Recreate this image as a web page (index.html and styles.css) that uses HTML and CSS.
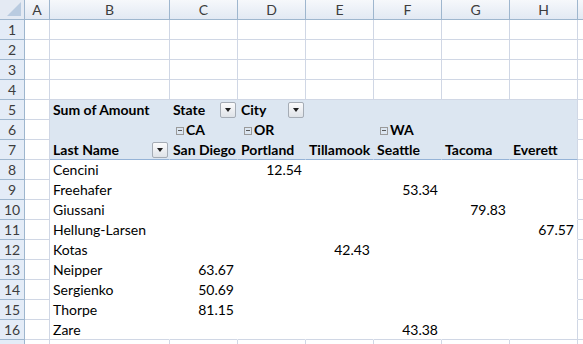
FILE: index.html
```html
<!DOCTYPE html>
<html>
<head>
<meta charset="utf-8">
<link rel="stylesheet" href="styles.css">
</head>
<body>
<div class="sheet">
  <div class="corner"><span class="tri"></span></div>
  <div class="ch">A</div><div class="ch">B</div><div class="ch">C</div><div class="ch">D</div><div class="ch">E</div><div class="ch">F</div><div class="ch">G</div><div class="ch">H</div><div class="ch"></div>

  <div class="rh">1</div><div class="c"></div><div class="c"></div><div class="c"></div><div class="c"></div><div class="c"></div><div class="c"></div><div class="c"></div><div class="c"></div><div class="c"></div>
  <div class="rh">2</div><div class="c"></div><div class="c"></div><div class="c"></div><div class="c"></div><div class="c"></div><div class="c"></div><div class="c"></div><div class="c"></div><div class="c"></div>
  <div class="rh">3</div><div class="c"></div><div class="c"></div><div class="c"></div><div class="c"></div><div class="c"></div><div class="c"></div><div class="c"></div><div class="c"></div><div class="c"></div>
  <div class="rh">4</div><div class="c"></div><div class="c"></div><div class="c"></div><div class="c"></div><div class="c"></div><div class="c"></div><div class="c"></div><div class="c"></div><div class="c"></div>

  <div class="rh">5</div><div class="c"></div>
  <div class="pv b">Sum of Amount</div>
  <div class="pv b fl"><span>State</span><span class="dd"></span></div>
  <div class="pv b fl"><span>City</span><span class="dd"></span></div>
  <div class="pv"></div><div class="pv"></div><div class="pv"></div><div class="pv end"></div>
  <div class="c"></div>

  <div class="rh">6</div><div class="c"></div>
  <div class="pv"></div>
  <div class="pv b"><span class="mb"></span>CA</div>
  <div class="pv b"><span class="mb"></span>OR</div>
  <div class="pv"></div>
  <div class="pv b"><span class="mb"></span>WA</div>
  <div class="pv"></div><div class="pv end"></div>
  <div class="c"></div>

  <div class="rh">7</div><div class="c"></div>
  <div class="pv last b fl"><span>Last Name</span><span class="dd"></span></div>
  <div class="pv last b">San Diego</div>
  <div class="pv last b">Portland</div>
  <div class="pv last b">Tillamook</div>
  <div class="pv last b">Seattle</div>
  <div class="pv last b">Tacoma</div>
  <div class="pv last b end">Everett</div>
  <div class="c"></div>

  <div class="rh">8</div><div class="c"></div><div class="d">Cencini</div><div class="d"></div><div class="d n">12.54</div><div class="d"></div><div class="d"></div><div class="d"></div><div class="d end"></div><div class="c"></div>
  <div class="rh">9</div><div class="c"></div><div class="d">Freehafer</div><div class="d"></div><div class="d"></div><div class="d"></div><div class="d n">53.34</div><div class="d"></div><div class="d end"></div><div class="c"></div>
  <div class="rh">10</div><div class="c"></div><div class="d">Giussani</div><div class="d"></div><div class="d"></div><div class="d"></div><div class="d"></div><div class="d n">79.83</div><div class="d end"></div><div class="c"></div>
  <div class="rh">11</div><div class="c"></div><div class="d">Hellung-Larsen</div><div class="d"></div><div class="d"></div><div class="d"></div><div class="d"></div><div class="d"></div><div class="d n end">67.57</div><div class="c"></div>
  <div class="rh">12</div><div class="c"></div><div class="d">Kotas</div><div class="d"></div><div class="d"></div><div class="d n">42.43</div><div class="d"></div><div class="d"></div><div class="d end"></div><div class="c"></div>
  <div class="rh">13</div><div class="c"></div><div class="d">Neipper</div><div class="d n">63.67</div><div class="d"></div><div class="d"></div><div class="d"></div><div class="d"></div><div class="d end"></div><div class="c"></div>
  <div class="rh">14</div><div class="c"></div><div class="d">Sergienko</div><div class="d n">50.69</div><div class="d"></div><div class="d"></div><div class="d"></div><div class="d"></div><div class="d end"></div><div class="c"></div>
  <div class="rh">15</div><div class="c"></div><div class="d">Thorpe</div><div class="d n">81.15</div><div class="d"></div><div class="d"></div><div class="d"></div><div class="d"></div><div class="d end"></div><div class="c"></div>
  <div class="rh">16</div><div class="c"></div><div class="d bot">Zare</div><div class="d bot"></div><div class="d bot"></div><div class="d bot"></div><div class="d bot n">43.38</div><div class="d bot"></div><div class="d bot end"></div><div class="c"></div>

  <div class="rh"></div><div class="c"></div><div class="c"></div><div class="c"></div><div class="c"></div><div class="c"></div><div class="c"></div><div class="c"></div><div class="c"></div><div class="c"></div>
</div>
</body>
</html>
```
FILE: styles.css
```css
html, body {
  margin: 0;
  padding: 0;
  overflow: hidden;
  background: #ffffff;
}

.sheet {
  display: grid;
  grid-template-columns: 25px 25px 120px 68px 68px 68px 68px 68px 68px 1fr;
  grid-auto-rows: 20px;
  width: 583px;
  font-family: Lato, "Open Sans", sans-serif;
  font-size: 14px;
  color: #000;
}

.sheet > div {
  box-sizing: border-box;
  border-right: 1px solid #d0d7e5;
  border-bottom: 1px solid #d0d7e5;
  line-height: 19px;
  white-space: nowrap;
  overflow: hidden;
  padding: 0 3px;
}

.sheet > .corner {
  position: relative;
  background: #e4eaf3;
  border-right: 1px solid #9eb6ce;
  border-bottom: 1px solid #9eb6ce;
  padding: 0;
}

.tri {
  position: absolute;
  right: 3px;
  bottom: 3px;
  width: 0;
  height: 0;
  border-left: 14px solid transparent;
  border-bottom: 14px solid #b9cbe0;
}

.sheet > .ch {
  background: linear-gradient(#f6f8fb, #e2e9f3);
  border-right: 1px solid #9eb6ce;
  border-bottom: 1px solid #9eb6ce;
  text-align: center;
  color: #3d3d3d;
  padding: 0;
}

.sheet > .rh {
  background: #e4ecf7;
  border-right: 1px solid #9eb6ce;
  border-bottom: 1px solid #9eb6ce;
  text-align: center;
  color: #3d3d3d;
  padding: 0;
}

.sheet > .pv {
  background: #dce6f1;
  border-right-color: transparent;
  border-bottom-color: transparent;
}

.sheet > .pv.last {
  border-bottom: 1px solid #95b3d7;
}

.sheet > .d {
  border-right-color: transparent;
  border-bottom-color: transparent;
}

.sheet > .d.bot {
  border-bottom-color: #d0d7e5;
}

.sheet > .end {
  border-right-color: #d0d7e5;
}

.b {
  font-weight: bold;
}

.n {
  text-align: right;
}

.sheet > .fl {
  display: flex;
  align-items: center;
  justify-content: space-between;
  padding-right: 1px;
}

.dd {
  box-sizing: border-box;
  width: 16px;
  height: 16px;
  border: 1px solid #a5acb5;
  border-radius: 2px;
  background: linear-gradient(#fbfbfc, #dfe3e8);
  position: relative;
  flex: none;
}

.dd::after {
  content: "";
  position: absolute;
  left: 4px;
  top: 5px;
  width: 0;
  height: 0;
  border-left: 3.5px solid transparent;
  border-right: 3.5px solid transparent;
  border-top: 4px solid #1e1e1e;
}

.mb {
  display: inline-block;
  box-sizing: border-box;
  width: 8px;
  height: 8px;
  border: 1px solid #9a9a9a;
  margin: 0 2px 0 3px;
  position: relative;
  vertical-align: 0px;
}

.mb::after {
  content: "";
  position: absolute;
  left: 1px;
  right: 1px;
  top: 2px;
  height: 1px;
  background: #5a5a5a;
}
```
